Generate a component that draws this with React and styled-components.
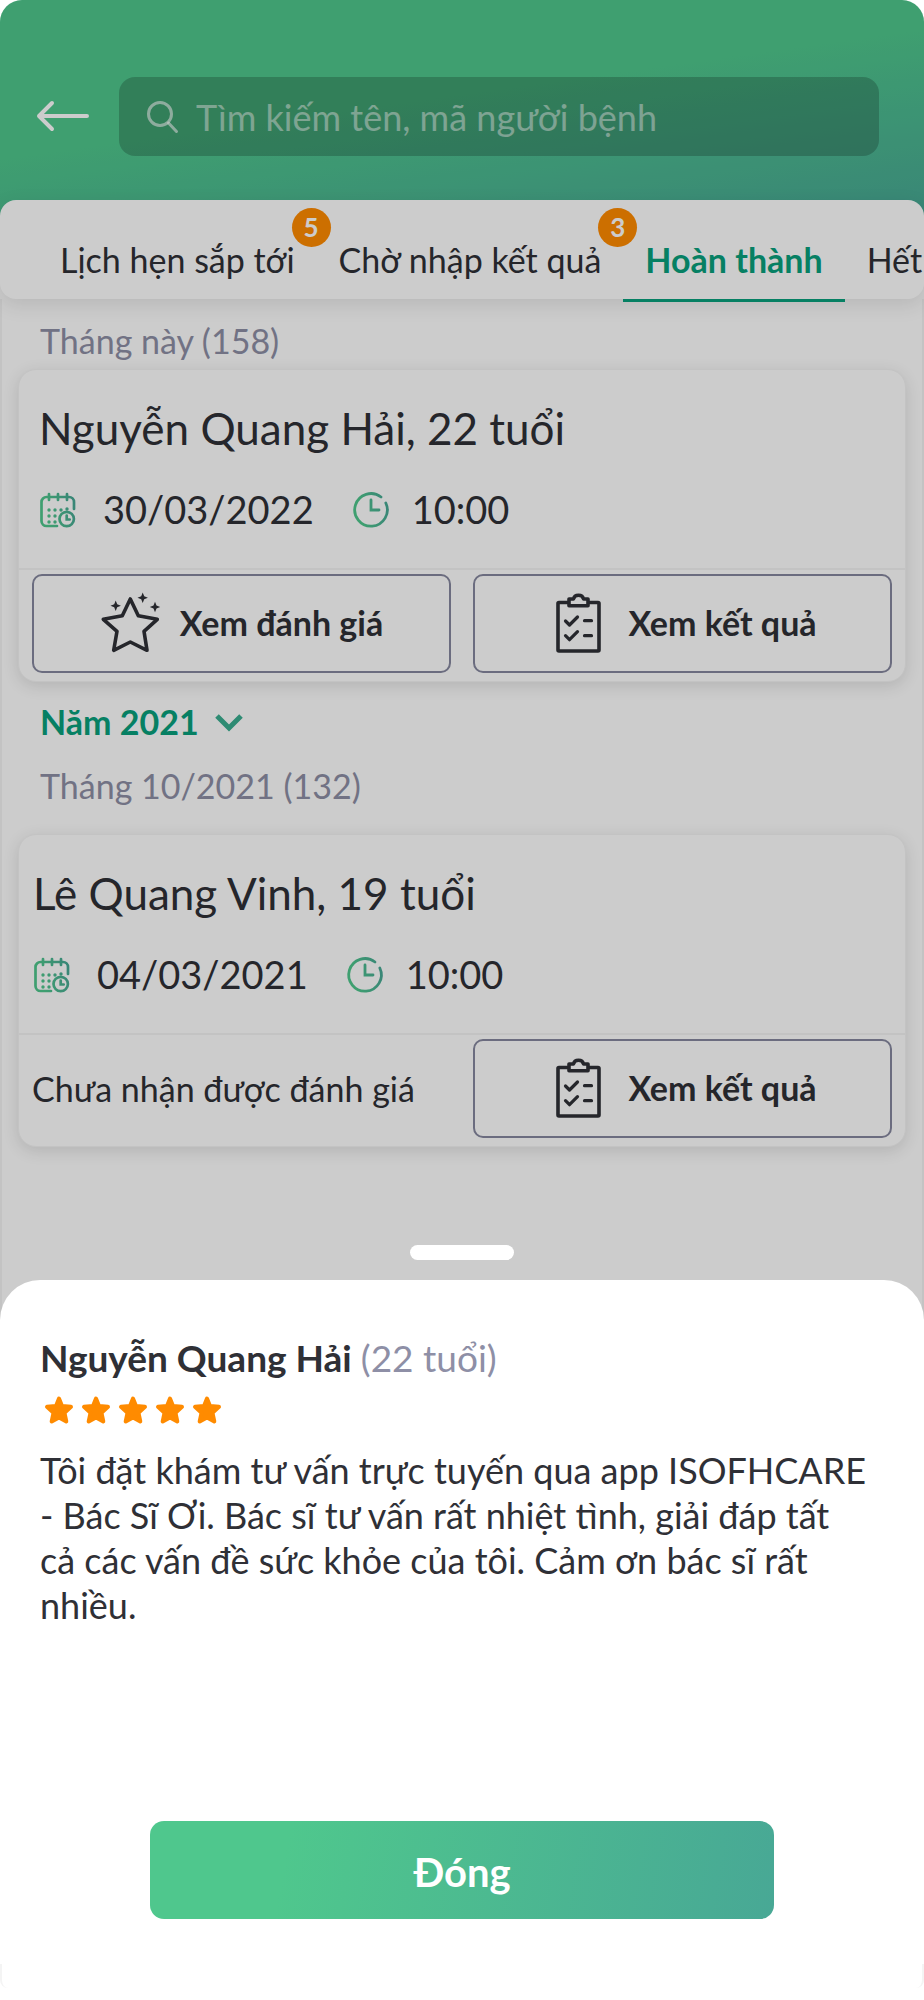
import React from "react";
import styled, {createGlobalStyle} from "styled-components";

const GlobalStyle = createGlobalStyle`
  * {
    box-sizing: border-box;
  }

  body {
    margin: 0;
    background: #fff;
    color: #2f3036;
    font-family: Lato, "Open Sans", sans-serif;
  }

  button, input {
    font-family: inherit;
    color: inherit;
    border: none;
    background: none;
    padding: 0;
  }

  button {
    cursor: pointer;
  }

  h1, h2, p {
    margin: 0;
  }

  svg {
    display: block;
    flex: none;
    overflow: visible;
  }
`;

const Screen = styled.div`
  display: grid;
  grid-template-columns: minmax(0, 1fr);
  min-height: 100vh;
  overflow: hidden;
  border-radius: 22px 22px 0 0;
`;

const Page = styled.div`
  grid-area: 1 / 1;
  display: flex;
  flex-direction: column;
  min-width: 0;
`;

const Header = styled.header`
  display: flex;
  align-items: center;
  gap: 30px;
  padding: 77px 45px 60px 37px;
  background: linear-gradient(172deg, #4fc78d 46%, #48a895 100%);
`;

const SearchBox = styled.label`
  display: flex;
  align-items: center;
  gap: 18px;
  flex: 1;
  height: 79px;
  padding: 0 28px;
  border-radius: 16px;
  background: rgba(0, 0, 0, 0.2);
`;

const SearchInput = styled.input`
  flex: 1;
  min-width: 0;
  color: #fff;
  font-size: 36px;
  outline: none;

  &::placeholder {
    color: rgba(255, 255, 255, 0.5);
    opacity: 1;
  }
`;

const Tabs = styled.nav`
  position: relative;
  display: flex;
  height: 99px;
  margin-top: -16px;
  padding-left: 38px;
  border-radius: 16px;
  background: #fff;
  box-shadow: 0 6px 20px rgba(0, 0, 0, 0.1);
`;

const Tab = styled.button`
  position: relative;
  flex: none;
  padding: 20px 22px 0;
  font-size: 34px;
  line-height: 40px;
  white-space: nowrap;
  font-weight: ${props => (props.$active ? 700 : 400)};
  color: ${props => (props.$active ? "#08a07c" : "inherit")};
  box-shadow: ${props => (props.$active ? "0 3px 0 #08a07c" : "none")};
`;

const Badge = styled.span`
  position: absolute;
  top: 8px;
  right: -14px;
  width: 39px;
  height: 39px;
  border-radius: 50%;
  background: #ff8b00;
  color: #fff;
  font-size: 26px;
  font-weight: 700;
  line-height: 39px;
  text-align: center;
`;

const Body = styled.main`
  flex: 1;
  padding: 22px 16px 0;
  border: solid #f4f4f4;
  border-width: 0 2px;
`;

const MonthLabel = styled.p`
  padding-left: 22px;
  margin-bottom: ${props => (props.$spaced ? 28 : 8)}px;
  color: #8e8fa6;
  font-size: 34px;
  line-height: 40px;
`;

const YearToggle = styled.button`
  display: flex;
  align-items: center;
  gap: 16px;
  margin: 20px 0 24px;
  padding-left: 22px;
  color: #08a07c;
  font-size: 34px;
  font-weight: 700;
  line-height: 40px;
`;

const Card = styled.article`
  border: 1px solid #f4f4f4;
  border-radius: 18px;
  background: #fff;
  box-shadow: 0 4px 16px rgba(0, 0, 0, 0.12);
`;

const CardInfo = styled.div`
  display: flex;
  flex-direction: column;
  gap: 32px;
  padding: 32px 20px 36px ${props => (props.$compact ? 14 : 20)}px;
  border-bottom: 2px solid #f4f4f4;
`;

const PatientName = styled.h2`
  font-size: 44px;
  font-weight: 400;
  line-height: 52px;
`;

const Schedule = styled.div`
  display: flex;
  gap: 38px;
`;

const ScheduleItem = styled.div`
  display: flex;
  align-items: center;
  gap: ${props => props.$gap}px;
  font-size: 38px;
  line-height: 46px;
`;

const CardActions = styled.div`
  display: grid;
  grid-template-columns: 1fr 1fr;
  align-items: center;
  gap: 22px;
  padding: 4px 13px 8px;
`;

const ActionButton = styled.button`
  display: flex;
  align-items: center;
  justify-content: center;
  gap: 20px;
  height: 99px;
  padding-bottom: 2px;
  border: 2px solid #86889f;
  border-radius: 10px;
  font-size: 34px;
  font-weight: 700;
`;

const NoReview = styled.p`
  font-size: 34px;
  line-height: 40px;
`;

const Overlay = styled.div`
  grid-area: 1 / 1;
  position: relative;
  display: flex;
  flex-direction: column;
  align-items: center;
  justify-content: flex-end;
  background: rgba(0, 0, 0, 0.2);
`;

const Handle = styled.div`
  width: 104px;
  height: 15px;
  margin-bottom: 20px;
  border-radius: 8px;
  background: #fff;
`;

const Sheet = styled.section`
  display: flex;
  flex-direction: column;
  align-self: stretch;
  min-height: calc(36vh - 36px);
  padding: 56px 40px 45px;
  border-radius: 40px 40px 0 0;
  background: #fff;
`;

const HomeArea = styled.div`
  align-self: stretch;
  padding-bottom: 12px;
  background: #fff;
`;

const HomeFrame = styled.div`
  height: 24px;
  border: solid #f4f4f4;
  border-width: 0 2px;
  border-radius: 0 0 8px 8px;
`;

const Reviewer = styled.h1`
  font-size: 37px;
  line-height: 44px;
`;

const Age = styled.span`
  color: #8e8fa6;
  font-weight: 400;
`;

const Stars = styled.div`
  display: flex;
  gap: 9px;
  padding: 16px 5px 24px;
`;

const ReviewText = styled.p`
  padding-right: 16px;
  font-size: 36px;
  line-height: 45px;
`;

const CloseButton = styled.button`
  align-self: center;
  width: 74%;
  height: 98px;
  margin-top: auto;
  padding-top: 4px;
  border-radius: 14px;
  background: linear-gradient(100deg, #4fc78d 22%, #48a895 100%);
  color: #fff;
  font-size: 40px;
  font-weight: 700;
`;

const BackIcon = () => (
	<svg width="52" height="32" fill="none" stroke="#fff" strokeWidth="4" strokeLinecap="round" strokeLinejoin="round">
		<path d="M50 15H2M15 2L2 15l13 13" />
	</svg>
);

const SearchIcon = () => (
	<svg width="31" height="32" fill="none" stroke="#fff" strokeOpacity="0.6" strokeWidth="3" strokeLinecap="round">
		<circle cx="13" cy="13" r="11.5" />
		<path d="M21.5 22l8 8.5" />
	</svg>
);

const ChevronIcon = () => (
	<svg width="28" height="20" fill="none" stroke="#3aae90" strokeWidth="5">
		<path d="M2 4l12 12L26 4" />
	</svg>
);

// shared stroke colour of the calendar and the clock
const IconGradient = () => (
	<svg width="0" height="0" style={{position: "absolute"}} aria-hidden="true">
		<defs>
			<linearGradient id="iconGreen" gradientUnits="userSpaceOnUse" x1="8" y1="20" x2="36" y2="14">
				<stop offset="0" stopColor="#4fc78d" />
				<stop offset="1" stopColor="#48a895" />
			</linearGradient>
		</defs>
	</svg>
);

const dots = [[10, 19], [16, 19], [22, 19], [28, 18], [10, 25], [16, 25], [10, 31], [16, 31]];

const CalendarIcon = () => (
	<svg width="36" height="36" fill="none" stroke="url(#iconGreen)" strokeWidth="2.7" strokeLinecap="round">
		<path d="M18 35H7.500a5 5 0 0 1-5-5V11a5 5 0 0 1 5-5H30a5 5 0 0 1 5 5v7" />
		<path d="M10 3v6M19 3v6M28 3v6" />
		<circle cx="27.700" cy="28" r="7.200" />
		<path d="M27.700 24.500v4h3" />
		{dots.map(([x, y]) => (
			<circle key={`${x}-${y}`} cx={x} cy={y} r="1.700" fill="url(#iconGreen)" stroke="none" />
		))}
	</svg>
);

const ClockIcon = () => (
	<svg width="36" height="36" fill="none" stroke="url(#iconGreen)" strokeWidth="2.800" strokeLinecap="round">
		<path d="M29 6A16.300 16.300 0 1 0 33.800 12" />
		<path d="M19 9v10h8" />
	</svg>
);

const RateIcon = () => (
	<svg width="60" height="60" fill="none" stroke="#2f3036" strokeWidth="3.600" strokeLinejoin="round">
		<path d="M30.300 6L38.300 22.700L57.300 26.300L44 38.300L47 57.300L30.300 49L13.700 57.300L17 38.300L3.300 26.300L22.300 22.700Z" />
		<g fill="#2f3036" stroke="none">
			<path d="M15.700 7.500l1.500 3.700l3.700 1.500l-3.700 1.500l-1.500 3.700l-1.500-3.700l-3.700-1.500l3.700-1.500z" />
			<path d="M42.700 -0.500l1.500 3.700l3.700 1.500l-3.700 1.500l-1.500 3.700l-1.500-3.700l-3.700-1.500l3.700-1.500z" />
			<path d="M55 8.800l1.500 3.700l3.700 1.500l-3.700 1.500l-1.500 3.700l-1.500-3.700l-3.700-1.500l3.700-1.500z" />
		</g>
	</svg>
);

const ResultIcon = () => (
	<svg width="60" height="60" fill="none" stroke="#2f3036" strokeWidth="3.600" strokeLinecap="round" strokeLinejoin="round">
		<path d="M20 9.500H11a1 1 0 0 0-1 1V57a1 1 0 0 0 1 1H50a1 1 0 0 0 1-1V10.500a1 1 0 0 0-1-1H41" />
		<path d="M21 12.800V6h4.500c1-5 9-5 10 0H40v6.800z" />
		<path d="M17.500 28l4 4l8-8M17.500 42.700l4 4l8-8" strokeWidth="3.200" />
		<path d="M36.500 27.700h7M36.500 42.700h7" strokeWidth="3.200" />
	</svg>
);

const StarIcon = () => (
	<svg width="28" height="28" fill="#ff8b00" stroke="#ff8b00" strokeWidth="4" strokeLinejoin="round">
		<path d="M14 2.500l3 7.500l9 .8l-6.500 6l1.800 8.700l-7.300-4l-7.300 4l1.800-8.700l-6.500-6l9-.8z" />
	</svg>
);

const tabs = [
	{label: "Lịch hẹn sắp tới", badge: 5},
	{label: "Chờ nhập kết quả", badge: 3},
	{label: "Hoàn thành", active: true},
	{label: "Hết"},
];

const Appointment = ({name, date, time, compact, reviewed}) => (
	<Card>
		<CardInfo $compact={compact}>
			<PatientName>{name}</PatientName>
			<Schedule>
				<ScheduleItem $gap={28}><CalendarIcon />{date}</ScheduleItem>
				<ScheduleItem $gap={24}><ClockIcon />{time}</ScheduleItem>
			</Schedule>
		</CardInfo>
		<CardActions>
			{reviewed
				? <ActionButton type="button"><RateIcon />Xem đánh giá</ActionButton>
				: <NoReview>Chưa nhận được đánh giá</NoReview>}
			<ActionButton type="button"><ResultIcon />Xem kết quả</ActionButton>
		</CardActions>
	</Card>
);

const App = () => (
	<Screen>
		<GlobalStyle />
		<Page>
			<IconGradient />
			<Header>
				<button type="button" aria-label="Quay lại"><BackIcon /></button>
				<SearchBox>
					<SearchIcon />
					<SearchInput type="text" aria-label="Tìm kiếm" placeholder="Tìm kiếm tên, mã người bệnh" />
				</SearchBox>
			</Header>
			<Tabs>
				{tabs.map(tab => (
					<Tab key={tab.label} type="button" $active={tab.active}>
						{tab.label}
						{tab.badge && <Badge>{tab.badge}</Badge>}
					</Tab>
				))}
			</Tabs>
			<Body>
				<MonthLabel>Tháng này (158)</MonthLabel>
				<Appointment name="Nguyễn Quang Hải, 22 tuổi" date="30/03/2022" time="10:00" reviewed />
				<YearToggle type="button">Năm 2021<ChevronIcon /></YearToggle>
				<MonthLabel $spaced>Tháng 10/2021 (132)</MonthLabel>
				<Appointment name="Lê Quang Vinh, 19 tuổi" date="04/03/2021" time="10:00" compact />
			</Body>
		</Page>
		<Overlay>
			<Handle />
			<Sheet role="dialog" aria-label="Đánh giá">
				<Reviewer>Nguyễn Quang Hải <Age>(22 tuổi)</Age></Reviewer>
				<Stars role="img" aria-label="5 sao">
					{[1, 2, 3, 4, 5].map(n => <StarIcon key={n} />)}
				</Stars>
				<ReviewText>
					Tôi đặt khám tư vấn trực tuyến qua app ISOFHCARE - Bác Sĩ Ơi. Bác sĩ tư vấn rất
					nhiệt tình, giải đáp tất cả các vấn đề sức khỏe của tôi. Cảm ơn bác sĩ rất nhiều.
				</ReviewText>
				<CloseButton type="button">Đóng</CloseButton>
			</Sheet>
			<HomeArea>
				<HomeFrame />
			</HomeArea>
		</Overlay>
	</Screen>
);

export default App;
